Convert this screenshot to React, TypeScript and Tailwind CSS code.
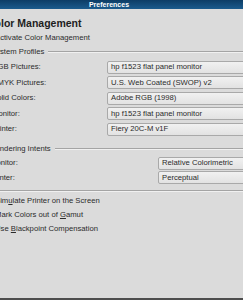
import React from 'react';

const profiles = [
  { label: 'RGB Pictures:', value: 'hp f1523 flat panel monitor' },
  { label: 'CMYK Pictures:', value: 'U.S. Web Coated (SWOP) v2' },
  { label: 'Solid Colors:', value: 'Adobe RGB (1998)' },
  { label: 'Monitor:', value: 'hp f1523 flat panel monitor' },
  { label: 'Printer:', value: 'Fiery 20C-M v1F' },
];

const intents = [
  { label: 'Monitor:', value: 'Relative Colorimetric' },
  { label: 'Printer:', value: 'Perceptual' },
];

function Combo({ value }: { value: string }) {
  return (
    <div className="flex-1 -mr-[30px] h-[13px] rounded-[2px] border border-[#a9a9a9] bg-gradient-to-b from-[#f1f1f1] to-[#e2e2e2] flex items-center pl-[3px] text-[7.7px] text-[#2b2b2b] whitespace-nowrap">
      {value}
    </div>
  );
}

function GroupHeader({ title, className }: { title: string; className: string }) {
  return (
    <div className={`flex items-center gap-[4px] h-[14px] ${className}`}>
      <span className="text-[7.7px] text-[#2b2b2b] whitespace-nowrap">{title}</span>
      <div className="flex-1 h-[2px] border-t border-[#a4a4a4] border-b border-b-[#f0f0f0]" />
    </div>
  );
}

function CheckRow({ before, u, after }: { before: string; u: string; after: string }) {
  return (
    <div className="h-[14px] flex items-center -ml-[18px] gap-[6px]">
      <div className="w-[7px] h-[7px] border border-[#8a8a8a] bg-[#f2f2f2]" />
      <span className="text-[7.7px] text-[#2b2b2b] whitespace-nowrap">
        {before}
        <span className="underline">{u}</span>
        {after}
      </span>
    </div>
  );
}

export default function App() {
  return (
    <div className="w-[243px] h-[300px] overflow-hidden bg-[#dbdbdb] flex flex-col font-['Liberation_Sans',Arial,sans-serif]">
      {/* title bar */}
      <div className="h-[9px] shrink-0 bg-gradient-to-b from-[#0d3d66] to-[#1b5b8d] flex items-center justify-center pr-[25px]">
        <span className="text-[7px] font-bold text-white leading-none">Preferences</span>
      </div>

      <div className="flex-1 flex flex-col pt-[8px]">
        <div className="h-[14px] flex items-center -ml-[13px]">
          <span className="text-[10.5px] font-bold text-[#1e1e1e] whitespace-nowrap">Color Management</span>
        </div>

        <CheckRow before="Activate Color Management" u="" after="" />

        <GroupHeader title="System Profiles" className="-ml-[9px]" />

        <div className="flex flex-col pt-[0.5px]">
          {profiles.map((p) => (
            <div key={p.label} className="h-[15.5px] flex items-center">
              <div className="w-[115px] -ml-[8px] shrink-0 text-[7.7px] text-[#2b2b2b] whitespace-nowrap">{p.label}</div>
              <Combo value={p.value} />
            </div>
          ))}
        </div>

        <GroupHeader title="Rendering Intents" className="-ml-[10px] mt-[5px]" />

        <div className="flex flex-col">
          {intents.map((p) => (
            <div key={p.label} className="h-[14.5px] flex items-center">
              <div className="w-[168px] -ml-[10px] shrink-0 text-[7.7px] text-[#2b2b2b] whitespace-nowrap">{p.label}</div>
              <Combo value={p.value} />
            </div>
          ))}
        </div>

        <div className="mt-[4.5px] h-[2px] border-t border-[#a4a4a4] border-b border-b-[#f0f0f0]" />

        <div className="flex flex-col pt-[2px]">
          <CheckRow before="Sim" u="u" after="late Printer on the Screen" />
          <CheckRow before="Mark Colors out of " u="G" after="amut" />
          <CheckRow before="Use " u="B" after="lackpoint Compensation" />
        </div>
      </div>

      <div className="h-[2px] shrink-0 bg-[#4d4d4d]" />
    </div>
  );
}
